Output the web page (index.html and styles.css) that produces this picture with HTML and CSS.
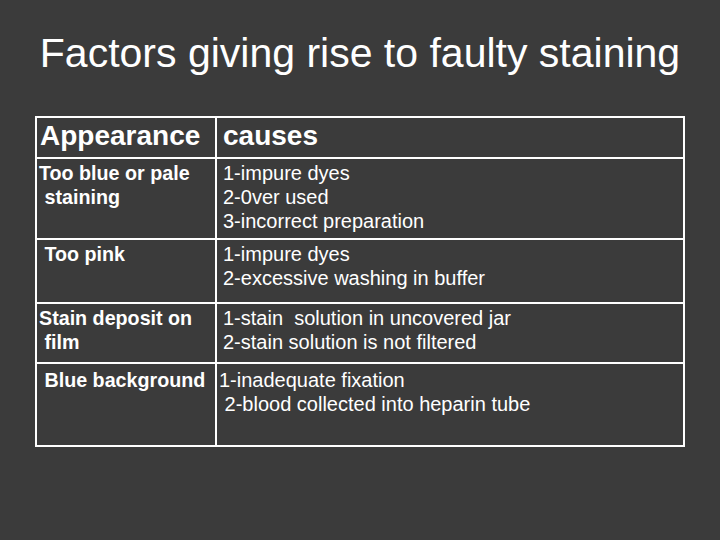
FILE: index.html
```html
<!DOCTYPE html>
<html>
<head>
<meta charset="utf-8">
<link rel="stylesheet" href="styles.css">
</head>
<body>
<div class="slide">
  <h1 class="title">Factors giving rise to faulty staining</h1>
  <table class="grid">
    <colgroup><col class="c1"><col class="c2"></colgroup>
    <tr class="head">
      <th class="a">Appearance</th>
      <th class="b">causes</th>
    </tr>
    <tr class="r1">
      <td class="a">Too blue or pale<br>&nbsp;staining</td>
      <td class="b">1-impure dyes<br>2-0ver used<br>3-incorrect preparation</td>
    </tr>
    <tr class="r2">
      <td class="a">&nbsp;Too pink</td>
      <td class="b">1-impure dyes<br>2-excessive washing in buffer</td>
    </tr>
    <tr class="r3">
      <td class="a">Stain deposit on<br>&nbsp;film</td>
      <td class="b">1-stain &nbsp;solution in uncovered jar<br>2-stain solution is not filtered</td>
    </tr>
    <tr class="r4">
      <td class="a">&nbsp;Blue background</td>
      <td class="b tight">1-inadequate fixation<br>&nbsp;2-blood collected into heparin tube</td>
    </tr>
  </table>
</div>
</body>
</html>
```

FILE: styles.css
```css
html, body {
  margin: 0;
  padding: 0;
  background: #3b3b3b;
}
.slide {
  width: 720px;
  height: 540px;
  padding-top: 29px;
  box-sizing: border-box;
  font-family: "Liberation Sans", Arial, sans-serif;
  color: #ffffff;
}
.title {
  margin: 0;
  font-size: 41px;
  font-weight: normal;
  line-height: 48px;
  text-align: center;
}
.grid {
  margin: 39px 0 0 35px;
  width: 650px;
  table-layout: fixed;
  border-collapse: separate;
  border-spacing: 0;
  border-top: 2px solid #ffffff;
  border-left: 2px solid #ffffff;
}
.c1 { width: 180px; }
.c2 { width: 468px; }
.grid th, .grid td {
  border-right: 2px solid #ffffff;
  border-bottom: 2px solid #ffffff;
  vertical-align: top;
  text-align: left;
  white-space: nowrap;
}
.grid th {
  font-size: 28px;
  font-weight: bold;
  line-height: 32px;
  padding: 2px 0 0 3px;
}
.grid th.b { padding-left: 6px; }
.grid td {
  font-size: 20px;
  line-height: 24px;
  padding: 2px 0 0 2px;
}
.grid td.a { font-weight: bold; font-size: 19.7px; }
.grid td.b { padding-left: 6px; }
.grid td.b.tight { padding-left: 2px; }
.head { height: 41px; }
.r1 { height: 81px; }
.r2 { height: 64px; }
.r3 { height: 60px; }
.r4 { height: 83px; }
.r4 td { padding-top: 4px; }
```
